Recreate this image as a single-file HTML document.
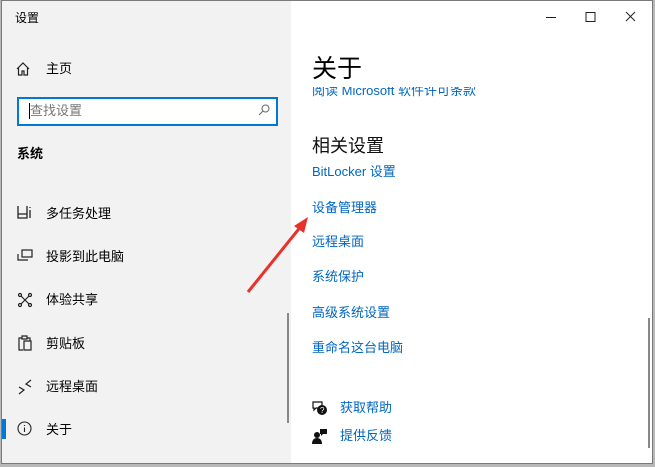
<!DOCTYPE html>
<html><head><meta charset="utf-8"><style>
*{margin:0;padding:0;box-sizing:border-box}
body{width:655px;height:467px;background:#b8b8b8;position:relative;overflow:hidden;font-family:"Liberation Sans","Noto Sans CJK SC",sans-serif;}
.win{position:absolute;left:1px;top:0;width:652px;height:464px;border:1px solid #7a7a7a;background:#fff;}
.left{position:absolute;left:0;top:0;width:289px;height:462px;background:#f2f2f2;}
.t{position:absolute;white-space:nowrap;font-size:13px;color:#000;line-height:16px}
.l{color:#0067c0}
svg{position:absolute}
</style></head><body>
<div class="win">
<div class="left">
<div class="t" style="left:13px;top:9px;font-size:12px">设置</div>
<svg style="left:14px;top:61px" width="14" height="14" viewBox="0 0 14 14" fill="none" stroke="#222" stroke-width="1.2"><path d="M1 7L7 1l6 6M2.5 5.5V13h3.5V9h2v4h3.5V5.5"/></svg>
<div class="t" style="left:44px;top:60px">主页</div>
<div style="position:absolute;left:15px;top:96px;width:261px;height:29px;border:2px solid #0078d7;background:#fff"></div>
<div style="position:absolute;left:27px;top:102px;width:1px;height:16px;background:#000"></div>
<div class="t" style="left:28px;top:102px;color:#777">查找设置</div>
<svg style="left:256px;top:103px" width="12" height="12" viewBox="0 0 12 12" fill="none" stroke="#666" stroke-width="1"><circle cx="7.5" cy="4.5" r="3.5"/><path d="M5 7l-4 4"/></svg>
<div class="t" style="left:15px;top:145px;font-weight:bold">系统</div>
<svg style="left:15px;top:204px" width="16" height="14" viewBox="0 0 16 14" fill="none" stroke="#222" stroke-width="1.3"><path d="M1 1v12h9V1M1 9h9M13 2v1M13 5v8"/></svg>
<div class="t" style="left:44px;top:205px">多任务处理</div>
<svg style="left:15px;top:248px" width="16" height="14" viewBox="0 0 16 14" fill="none" stroke="#222" stroke-width="1.2"><rect x="5" y="1" width="10" height="7"/><path d="M1 5v6h9M1 11h10"/></svg>
<div class="t" style="left:44px;top:248px">投影到此电脑</div>
<svg style="left:15px;top:291px" width="16" height="16" viewBox="0 0 16 16" fill="none" stroke="#222" stroke-width="1.2"><circle cx="3" cy="3" r="1.5"/><circle cx="13" cy="3" r="1.5"/><circle cx="3" cy="13" r="1.5"/><circle cx="13" cy="13" r="1.5"/><path d="M4 4l8 8M12 4l-8 8"/></svg>
<div class="t" style="left:44px;top:291px">体验共享</div>
<svg style="left:16px;top:334px" width="14" height="16" viewBox="0 0 14 16" fill="none" stroke="#222" stroke-width="1.2"><path d="M4 3H1v12h4M4 1h5v3H4zM9 3h3v3M6 6h7v9H6z"/></svg>
<div class="t" style="left:44px;top:335px">剪贴板</div>
<svg style="left:16px;top:378px" width="14" height="16" viewBox="0 0 14 16" fill="none" stroke="#222" stroke-width="1.2"><path d="M1 8l5 3-5 4M13 1L8 5l5 3"/></svg>
<div class="t" style="left:44px;top:378px">远程桌面</div>
<div style="position:absolute;left:0;top:418px;width:4px;height:20px;background:#0078d7"></div>
<svg style="left:15px;top:420px" width="15" height="15" viewBox="0 0 15 15" fill="none" stroke="#222" stroke-width="1.1"><circle cx="7.5" cy="7.5" r="6.5"/><path d="M7.5 6.5v4.5M7.5 4v1"/></svg>
<div class="t" style="left:44px;top:421px">关于</div>
<div style="position:absolute;left:285px;top:312px;width:2px;height:110px;background:#888"></div>
</div>
<svg style="left:540px;top:8px" width="100" height="16" viewBox="0 0 100 16" fill="none" stroke="#222" stroke-width="1"><path d="M4 8.5h10M44 3.5h9v9h-9zM84 3l9 9M93 3l-9 9"/></svg>
<div class="t" style="left:310px;top:53px;font-size:25px;line-height:30px">关于</div>
<div class="t l" style="left:310px;top:86px;height:10px;overflow:hidden"><div style="margin-top:-4px">阅读 Microsoft 软件许可条款</div></div>
<div class="t" style="left:310px;top:134px;font-size:18px;line-height:22px;color:#111">相关设置</div>
<div class="t l" style="left:310px;top:163px">BitLocker 设置</div>
<div class="t l" style="left:310px;top:199px">设备管理器</div>
<div class="t l" style="left:310px;top:233px">远程桌面</div>
<div class="t l" style="left:310px;top:268px">系统保护</div>
<div class="t l" style="left:310px;top:304px">高级系统设置</div>
<div class="t l" style="left:310px;top:339px">重命名这台电脑</div>
<svg style="left:310px;top:399px" width="16" height="16" viewBox="0 0 16 16"><path d="M1 2h9v6H4l-2 2V8H1z" fill="none" stroke="#111" stroke-width="1.2"/><circle cx="10" cy="10" r="5" fill="#111"/><text x="8" y="13" font-size="8" fill="#fff" font-family="Liberation Sans">?</text></svg>
<div class="t l" style="left:338px;top:399px">获取帮助</div>
<svg style="left:310px;top:427px" width="16" height="16" viewBox="0 0 16 16" fill="#111"><circle cx="5" cy="7" r="3"/><path d="M0 16c0-4 2-6 5-6s5 2 5 6z"/><path d="M8 1h7v5h-4l-2 2V6H8z"/></svg>
<div class="t l" style="left:338px;top:427px">提供反馈</div>
<div style="position:absolute;left:646px;top:317px;width:2px;height:130px;background:#888"></div>
<svg style="left:0;top:0" width="652" height="464"><path d="M246 291L300 224" stroke="#e8322b" stroke-width="3"/><path d="M306 216L292 225L302 232Z" fill="#e8322b"/></svg>
</div>
</body></html>
